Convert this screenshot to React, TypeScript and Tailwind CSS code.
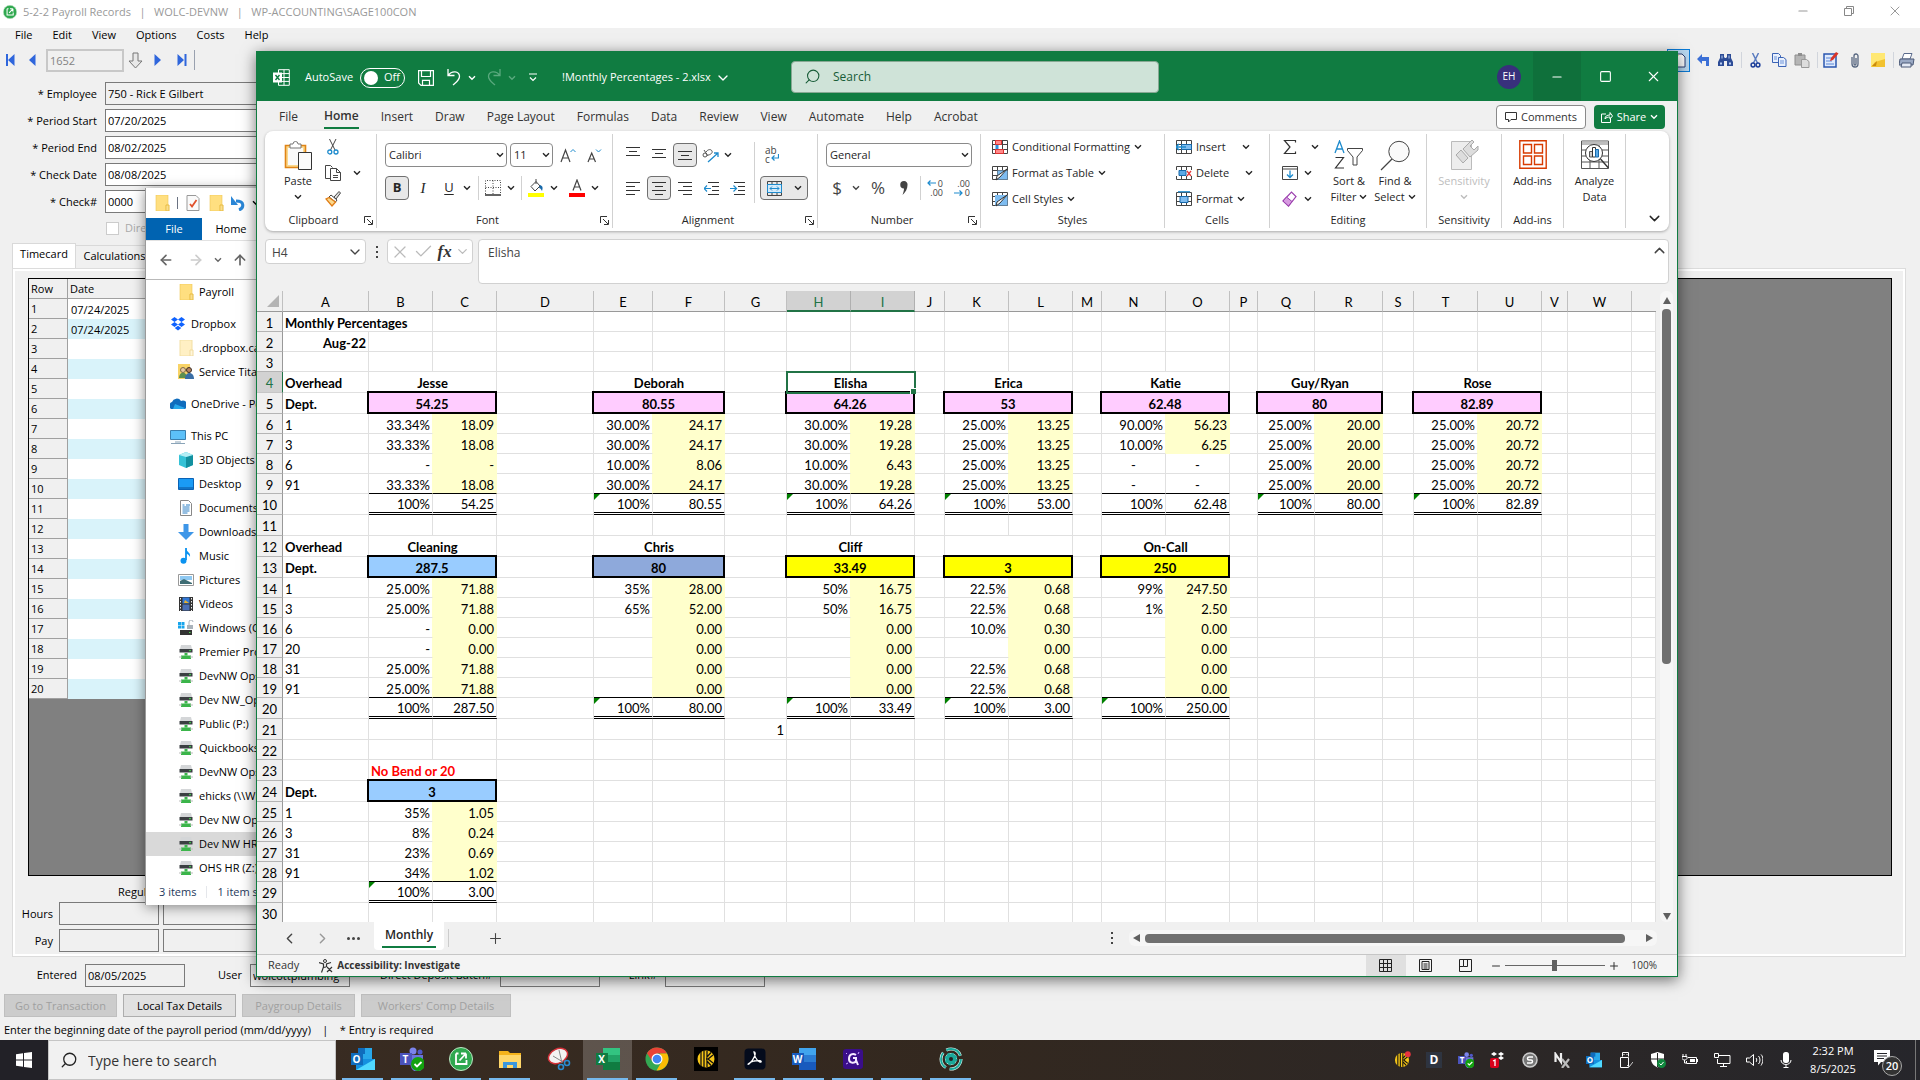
import type { ReactNode } from "react";
import { clsx } from "clsx";
import {
  ArrowLeft,
  ArrowRight,
  ArrowUp,
  Check,
  ChevronDown,
  ChevronLeft,
  ChevronRight,
  ChevronUp,
  Minus,
  Plus,
  Search,
  Square,
  X,
} from "lucide-react";

/* ---------- shared bits ---------- */

function Chev({ className }: { className?: string }) {
  return (
    <svg viewBox="0 0 8 6" className={clsx("w-2 h-1.5 shrink-0", className)} fill="none" stroke="currentColor" strokeWidth="1.4">
      <path d="M1 1.2 4 4.2 7 1.2" />
    </svg>
  );
}

function Svg({ w = 16, h = 16, box, children }: { w?: number; h?: number; box?: string; children: ReactNode }) {
  return (
    <svg width={w} height={h} viewBox={box ?? `0 0 ${w} ${h}`} fill="none" className="shrink-0" aria-hidden="true">
      {children}
    </svg>
  );
}

function IconButton({ label, className, children }: { label: string; className?: string; children: ReactNode }) {
  return (
    <button type="button" aria-label={label} className={clsx("flex items-center justify-center", className)}>
      {children}
    </button>
  );
}

/* ---------- payroll window ---------- */

const payrollFields = [
  { id: "employee", label: "* Employee", value: "750 - Rick E Gilbert", readOnly: true },
  { id: "period-start", label: "* Period Start", value: "07/20/2025" },
  { id: "period-end", label: "* Period End", value: "08/02/2025" },
  { id: "check-date", label: "* Check Date", value: "08/08/2025" },
  { id: "check-no", label: "* Check#", value: "0000" },
];

const footerFields = [
  { id: "entered", label: "Entered", value: "08/05/2025", width: "w-[85px]" },
  { id: "user", label: "User", value: "wolcottplumbing", width: "w-[65px]" },
  { id: "batch", label: "Direct Deposit Batch#", value: "", width: "w-[150px]" },
  { id: "link", label: "Link#", value: "", width: "w-[65px]" },
];

function SageLogo({ size }: { size: number }) {
  return (
    <Svg w={size} h={size} box="0 0 24 24">
      <circle cx="12" cy="12" r="11.5" fill="#2fa84f" stroke="#bfe6c6" strokeWidth="1" />
      <path d="M7 6.500v10.500h10.500v-4M7 6.500h2.500M10.500 13.500l6.500-7m0 0h-5m5 0v5" stroke="#fff" strokeWidth="1.8" />
    </Svg>
  );
}

function ToolSep() {
  return <span className="w-px h-4 bg-gray-300" />;
}

function PayrollToolbar() {
  return (
    <div className="flex items-center h-7 pl-0.5 shrink-0">
      <IconButton label="First record" className="w-4">
        <Svg w={10} h={12}><path d="M1 0h2v12H1zM9.500 0v12L3 6z" fill="#2f66dc" /></Svg>
      </IconButton>
      <IconButton label="Previous record" className="w-7">
        <Svg w={8} h={12}><path d="M7.500 0v12L1 6z" fill="#2f66dc" /></Svg>
      </IconButton>
      <input aria-label="Record number" readOnly value="1652" className="w-[78px] h-[23px] border-2 border-[#c8c8c8] bg-[#f0f0f0] px-0.5 text-[#838383]" />
      <IconButton label="Go to record" className="w-[22px]">
        <Svg w={15} h={17}><path d="M5 1h5v8h4l-6.500 7L1 9h4z" fill="#e8e8e8" stroke="#777" /></Svg>
      </IconButton>
      <IconButton label="Next record" className="w-6">
        <Svg w={8} h={12}><path d="M.5 0v12L7 6z" fill="#2f66dc" /></Svg>
      </IconButton>
      <IconButton label="Last record" className="w-6">
        <Svg w={10} h={12}><path d="M7.500 0h2v12h-2zM.5 0v12L7 6z" fill="#2f66dc" /></Svg>
      </IconButton>
      <span className="w-px h-5 bg-gray-400" />
      <div className="ml-auto flex items-center">
        <IconButton label="New" className="w-[23px] h-[23px] border border-[#0a7bd8] bg-[#b9d9f2] mr-0.5">
          <Svg w={14} h={16}><path d="M3 2h7l3 3v10H3z" fill="#fff" stroke="#2c3e75" /><path d="m3 0 1.200 2.500L7 3 4.700 5 3 7 1.500 5 0 3z" fill="#f4bf3b" /></Svg>
        </IconButton>
        <IconButton label="Undo" className="w-[22px]">
          <Svg w={13} h={14}><path d="M0 6 5 1v3h7v9H9V8H5v3z" fill="#3b6fd6" /></Svg>
        </IconButton>
        <IconButton label="Find" className="w-[22px]">
          <Svg w={15} h={14}><path d="M2 1h4v3l1 1h1l1-1V1h4v4l2 4v4H9V8H6v5H0V9l2-4z" fill="#2d4c96" /><path d="M2 9.500h2v2H2zM11 9.500h2v2h-2zM3.500 2.500h1v3h-1zM10.500 2.500h1v3h-1z" fill="#b9cdf2" /></Svg>
        </IconButton>
        <span className="w-[5px]" />
        <ToolSep />
        <IconButton label="Cut" className="w-[26px]">
          <Svg w={11} h={15}><path d="M2.500 0 7.500 10M8.500 0 3.500 10" stroke="#5b7cc0" strokeWidth="1.500" /><circle cx="3" cy="12" r="1.900" stroke="#1d3f9a" strokeWidth="1.500" /><circle cx="8" cy="12" r="1.900" stroke="#1d3f9a" strokeWidth="1.500" /></Svg>
        </IconButton>
        <IconButton label="Copy" className="w-[22px]">
          <Svg w={15} h={14}><path d="M.5.5h6l2 2v7h-8z" fill="#e8f0fd" stroke="#3b63b5" /><path d="M6.500 4.500h5l2.500 2v7H6.500z" fill="#e8f0fd" stroke="#3b63b5" /><path d="M8 8h4M8 10h4M2 4h3M2 6h3" stroke="#6f94d9" /></Svg>
        </IconButton>
        <IconButton label="Paste" className="w-6">
          <Svg w={16} h={15}><path d="M1 2h10v10H1z" fill="#b5b5b5" stroke="#8e8e8e" /><path d="M4 0h4v3H4z" fill="#8e8e8e" /><path d="M7.500 6.500h5l2.500 2v6H7.500z" fill="#ddd" stroke="#999" /></Svg>
        </IconButton>
        <span className="w-[3px]" />
        <ToolSep />
        <IconButton label="Edit note" className="w-[26px]">
          <Svg w={16} h={16}><path d="M1 2h12v13H1z" fill="#dfeafc" stroke="#2b57b0" strokeWidth="1.500" /><path d="M3 6h6M3 9h6M3 12h8" stroke="#5a86d6" /><path d="m7 9 1-3 5-6 2.500 1.500L10 8z" fill="#d9352a" /></Svg>
        </IconButton>
        <IconButton label="Attachments" className="w-[22px]">
          <Svg w={8} h={15}><path d="M1 4v7a3 3 0 0 0 6 0V3a2 2 0 0 0-4 0v8a1 1 0 0 0 2 0V5" stroke="#56657f" strokeWidth="1.300" /></Svg>
        </IconButton>
        <IconButton label="Notes" className="w-6">
          <Svg w={14} h={14}><path d="M0 0h14v14H0z" fill="#f2c230" /><path d="M0 0h14v6L4 9l-4 5z" fill="#ffe873" /><path d="M1 13 6 8l-1 5z" fill="#c98a0e" /></Svg>
        </IconButton>
        <span className="w-[3px]" />
        <ToolSep />
        <IconButton label="Print" className="w-[26px]">
          <Svg w={16} h={15}><path d="M5 .5h8L11 6H3z" fill="#fff" stroke="#5b6b8c" /><path d="M1 6h14l-1 6H0z" fill="#9aa9c4" stroke="#4a5876" /><path d="M3 10h9v4H2z" fill="#e4eaf5" stroke="#4a5876" /></Svg>
        </IconButton>
      </div>
    </div>
  );
}

function PayrollWindow() {
  return (
    <section className="flex-1 min-h-0 flex flex-col bg-[#f0f0f0] text-[11px] leading-4">
      <header className="flex items-center h-7 bg-white text-[#999] shrink-0 pl-[3px] pb-1">
        <SageLogo size={14} />
        <span className="ml-1.5 whitespace-pre">5-2-2 Payroll Records   |   WOLC-DEVNW   |   WP-ACCOUNTING\SAGE100CON</span>
        <div className="ml-auto flex self-start h-[22px] pr-0.5">
          <IconButton label="Minimize" className="w-[46px]"><Minus size={14} strokeWidth={2} /></IconButton>
          <IconButton label="Restore" className="w-[46px]">
            <Svg w={10} h={10}><path d="M.5 2.500h7v7h-7zM2.500 2.500v-2h7v7h-2" stroke="#888" /></Svg>
          </IconButton>
          <IconButton label="Close" className="w-[46px]"><X size={16} strokeWidth={1.5} /></IconButton>
        </div>
      </header>

      <nav className="flex h-[18px] pb-1 pl-[15px] gap-5 items-center shrink-0">
        {["File", "Edit", "View", "Options", "Costs", "Help"].map((m) => (
          <button key={m} type="button">{m}</button>
        ))}
      </nav>

      <PayrollToolbar />

      <div className="flex flex-col gap-1 pt-2 shrink-0">
        {payrollFields.map((f) => (
          <div key={f.id} className="flex items-center h-[23px]">
            <label htmlFor={f.id} className="w-[97px] text-right">{f.label}</label>
            <input
              id={f.id}
              defaultValue={f.value}
              readOnly={f.readOnly}
              className={clsx("ml-2 w-[260px] h-[23px] border border-[#7a7a7a] px-0.5", f.readOnly ? "bg-[#f0f0f0]" : "bg-white")}
            />
          </div>
        ))}
      </div>
      <label className="flex items-center gap-1.5 pl-[106px] h-[30px] text-[#a9a9a9] shrink-0">
        <input type="checkbox" disabled className="appearance-none size-[13px] border border-[#ccc] bg-white" />
        Direct Deposit
      </label>

      <div className="flex items-end h-[25px] pl-3 shrink-0" role="tablist">
        <button type="button" role="tab" className="h-[25px] w-16 pb-1 border border-b-0 border-[#d9d9d9] bg-white">Timecard</button>
        <button type="button" role="tab" className="h-[23px] w-[78px] pb-0.5 border border-l-0 border-b-0 border-[#d9d9d9]">Calculations</button>
      </div>

      <div className="flex-1 min-h-0 flex flex-col ml-3 mr-[14px] border border-[#dcdcdc] outline-2 outline-white -outline-offset-3">
        <div className="flex-1 min-h-0 mt-[9px] ml-[15px] mr-[13px] mb-[81px] border border-black bg-[#808080]">
          <table className="border-separate border-spacing-0">
            <thead>
              <tr className="h-5 bg-[#f0f0f0]">
                <th className="w-[39px] p-0 pl-0.5 text-left font-normal border-r border-b border-[#a0a0a0]">Row</th>
                <th className="w-[200px] p-0 pl-0.5 text-left font-normal border-b border-[#a0a0a0]">Date</th>
              </tr>
            </thead>
            <tbody>
              {Array.from({ length: 20 }, (_, i) => (
                <tr key={i} className="h-5">
                  <td className="p-0 pl-0.5 bg-[#f0f0f0] border-r border-b border-[#a0a0a0]">{i + 1}</td>
                  <td className={clsx("p-0 pl-[3px] pt-0.5", i % 2 ? "bg-[#d9f3fa]" : "bg-white")}>{i < 2 ? "07/24/2025" : ""}</td>
                </tr>
              ))}
            </tbody>
          </table>
        </div>
        <div className="h-20 -mt-[81px] shrink-0 pt-2">
          <div className="pl-[105px] h-4">Regular</div>
          {["Hours", "Pay"].map((l) => (
            <div key={l} className="flex items-center h-[27px]">
              <label htmlFor={l} className="w-10 text-right">{l}</label>
              <input id={l} readOnly className="ml-1.5 w-[100px] h-[23px] border border-[#7a7a7a]" />
              <input aria-label={`${l}, second column`} readOnly className="ml-1 w-[100px] h-[23px] border border-[#7a7a7a]" />
            </div>
          ))}
        </div>
      </div>

      <div className="flex items-center h-[37px] pb-px shrink-0">
        {footerFields.map((f) => (
          <div key={f.id} className="flex items-center">
            <label htmlFor={f.id} className={clsx("text-right pr-2", f.width)}>{f.label}</label>
            <input id={f.id} readOnly value={f.value} className="w-[100px] h-[23px] border border-[#7a7a7a] px-0.5" />
          </div>
        ))}
      </div>
      <div className="flex gap-1.5 pl-1 h-[23px] shrink-0">
        <button type="button" disabled className="w-[113px] bg-[#ccc] border border-[#bfbfbf] text-[#a0a0a0]">Go to Transaction</button>
        <button type="button" className="w-[113px] bg-[#e1e1e1] border border-[#adadad]">Local Tax Details</button>
        <button type="button" disabled className="w-[113px] bg-[#ccc] border border-[#bfbfbf] text-[#a0a0a0]">Paygroup Details</button>
        <button type="button" disabled className="w-[150px] bg-[#ccc] border border-[#bfbfbf] text-[#a0a0a0]">Workers' Comp Details</button>
      </div>
      <p className="h-[23px] pt-[5px] pl-1 whitespace-pre shrink-0">Enter the beginning date of the payroll period (mm/dd/yyyy)    |    * Entry is required</p>
    </section>
  );
}

/* ---------- file explorer ---------- */

type TreeIcon = "folder" | "hidden" | "shared" | "dropbox" | "onedrive" | "pc" | "cube" | "desktop" | "doc" | "down" | "music" | "picture" | "video" | "disk" | "net";

const tree: { icon: TreeIcon; name: string; root?: boolean; active?: boolean }[] = [
  { icon: "folder", name: "Payroll" },
  { icon: "dropbox", name: "Dropbox", root: true },
  { icon: "hidden", name: ".dropbox.cache" },
  { icon: "shared", name: "Service Titan" },
  { icon: "onedrive", name: "OneDrive - Personal", root: true },
  { icon: "pc", name: "This PC", root: true },
  { icon: "cube", name: "3D Objects" },
  { icon: "desktop", name: "Desktop" },
  { icon: "doc", name: "Documents" },
  { icon: "down", name: "Downloads" },
  { icon: "music", name: "Music" },
  { icon: "picture", name: "Pictures" },
  { icon: "video", name: "Videos" },
  { icon: "disk", name: "Windows (C:)" },
  { icon: "net", name: "Premier Pro" },
  { icon: "net", name: "DevNW Ops" },
  { icon: "net", name: "Dev NW_Ops" },
  { icon: "net", name: "Public (P:)" },
  { icon: "net", name: "Quickbooks" },
  { icon: "net", name: "DevNW Ops" },
  { icon: "net", name: "ehicks (\\\\WP)" },
  { icon: "net", name: "Dev NW Ops" },
  { icon: "net", name: "Dev NW HR", active: true },
  { icon: "net", name: "OHS HR (Z:)" },
];

const treeIcons: Record<TreeIcon, ReactNode> = {
  folder: <><path d="M2 0h12v16H2z" fill="#ffdf80" /><path d="M12 10h3v6h-3z" fill="#ffe9a8" stroke="#e6b93c" /><path d="M2 0h12v16H2z" stroke="#efc650" strokeWidth=".6" /></>,
  hidden: <><path d="M2 0h12v16H2z" fill="#fff0c4" stroke="#f2dfa4" /><path d="M12 10h3v6h-3z" fill="#fff6dc" stroke="#f0dba0" /></>,
  shared: <><path d="M0 0h12v15H0z" fill="#f8d366" /><circle cx="5" cy="6" r="2.500" fill="#e9c8a0" stroke="#7d6a4a" /><path d="M1 14c0-7 8-7 8 0z" fill="#5d8f4e" /><circle cx="11" cy="6" r="2.500" fill="#b78562" stroke="#3b2d24" /><path d="M7 15c0-8 9-8 9 0z" fill="#3a6ea5" /></>,
  dropbox: <path d="M4.500 1 8 3.500 4.500 6 1 3.500zM11.500 1 15 3.500 11.500 6 8 3.500zM4.500 6 8 8.500 4.500 11 1 8.500zM11.500 6 15 8.500 11.500 11 8 8.500zM8 9.800l3.300 2.300L8 14.500l-3.300-2.400z" fill="#0f62fe" />,
  onedrive: <><path d="M1 13a4 4 0 0 1 1-7 5 5 0 0 1 9-1 4 4 0 0 1 4 8z" fill="#0f6cbd" /><path d="m5 8 10 4a3 3 0 0 1-2 1H3z" fill="#28a8ea" /></>,
  pc: <><path d="M.5 2.500h15v9H.5z" fill="#5cc0f8" stroke="#3a7fae" /><path d="M5 14h6M1 15.500h14" stroke="#8aa4b8" /></>,
  cube: <><path d="m8 0 7 3v10l-7 3-7-3V3z" fill="#35c2d6" /><path d="m8 5 7-2v10l-7 3z" fill="#12909f" /><path d="m8 0 7 3-7 2-7-2z" fill="#b4eef5" /></>,
  desktop: <><path d="M.5 2.500h15v11H.5z" fill="#1a9bf5" stroke="#0a62b5" /><path d="M1 12h14" stroke="#0b4f96" /></>,
  doc: <><path d="M2.500.5h8l3 3v12h-11z" fill="#fff" stroke="#888" /><path d="M4.500 5h2M8 5h4M4.500 7h7M4.500 9h7M4.500 11h7M4.500 13h5" stroke="#2a7fc4" /></>,
  down: <path d="M5.500 0h5v8H16l-8 8-8-8h5.500z" fill="#3d96e8" />,
  music: <><path d="M8 0v12" stroke="#0a92f0" strokeWidth="1.800" /><path d="M8 0c0 4 5 4 4 9-1-3-4-3-4-4z" fill="#0a92f0" /><circle cx="5.500" cy="12.800" r="3" fill="#0a92f0" /></>,
  picture: <><path d="M.5 2.500h15v11H.5z" fill="#fff" stroke="#999" /><path d="M2 4h12v4H2z" fill="#8fc9f2" /><path d="M2 12V9l4-2 8 4v1z" fill="#3e6d74" /></>,
  video: <><path d="M1 1h14v14H1z" fill="#333" /><path d="M4.500 1.500h7v6h-7z" fill="#3278d6" /><path d="M4.500 8.500h7v6h-7z" fill="#4a6fb5" /><path d="m7 4 4 3H6z" fill="#e6b02e" /><path d="M2.500 2v13M13.500 2v13" stroke="#eee" strokeDasharray="1.500 1.500" /></>,
  disk: <><path d="M0 2h3v3H0zM3.500 2h3v3h-3zM0 5.500h3v3H0zM3.500 5.500h3v3h-3z" fill="#18a5ec" /><path d="M9 5h6v4H9z" fill="#aab3bb" /><path d="M11 5V2a2 2 0 0 1 4 0" stroke="#aab3bb" /><path d="M2 10h12v5H2z" fill="#333" /><path d="M11 12.500h1.500" stroke="#4be04b" /></>,
  net: <><path d="M3 1h10l1 4H2z" fill="#d4d6d8" /><path d="M1.500 5h13v3.500h-13z" fill="#3b3f42" /><path d="M11 6.700h2" stroke="#3fe04a" /><path d="M6.500 9h3v2.500h-3z" fill="#3bb54a" /><path d="M3 11.500h10V15H3z" fill="#3bb54a" /><path d="M1 13h3M12 13h3" stroke="#bbb" /></>,
};

function ExplorerWindow() {
  return (
    <section className="absolute left-[145px] top-[188px] bottom-[175px] w-[480px] bg-white flex flex-col text-[11px] leading-4 border-l border-[#9a9a9a] shadow-[0_2px_12px_rgba(0,0,0,0.45)]">
      <div className="flex items-center h-[30px] pl-2 gap-[7px] shrink-0">
        <Svg>{treeIcons.folder}</Svg>
        <span className="w-px h-3 bg-gray-500" />
        <Svg w={16} h={16}><path d="M2 .5h9l3 3v12H2z" fill="#fafafa" stroke="#999" /><path d="m5 9 2 2.500L11.500 5" stroke="#e0512b" strokeWidth="1.800" /></Svg>
        <Svg>{treeIcons.folder}</Svg>
        <Svg w={14} h={16}><path d="M8 15c5-2 6-9-3-9" stroke="#2a86d6" strokeWidth="3" /><path d="M0 1v9h7z" fill="#2a86d6" /></Svg>
        <Chev />
      </div>
      <div className="flex h-[23px] shrink-0 border-b border-[#e2e2e2]">
        <button type="button" className="w-14 bg-[#0063b1] text-white">File</button>
        <button type="button" className="w-[58px]">Home</button>
      </div>
      <div className="flex items-center h-[39px] pl-3 gap-2.5 shrink-0 border-b border-[#b9b9b9] text-[#666]">
        <IconButton label="Back"><ArrowLeft size={16} strokeWidth={2.5} /></IconButton>
        <IconButton label="Forward" className="ml-1 text-[#ccc]"><ArrowRight size={16} strokeWidth={2.5} /></IconButton>
        <Chev />
        <IconButton label="Up"><ArrowUp size={16} strokeWidth={2.5} /></IconButton>
        <input aria-label="Address" className="h-[22px] flex-1 border border-[#d9d9d9]" />
      </div>
      <ul className="flex-1 min-h-0 overflow-hidden">
        {tree.map((t, i) => (
          <li
            key={i}
            className={clsx(
              "flex items-center h-6 gap-[5px] whitespace-nowrap",
              t.root ? "mt-2 pl-6" : "pl-8",
              t.active && "bg-[#d9d9d9]",
            )}
          >
            <Svg>{treeIcons[t.icon]}</Svg>
            {t.name}
          </li>
        ))}
      </ul>
      <footer className="flex items-center h-[25px] pb-px pl-[13px] gap-2.5 text-[#1e395b] shrink-0">
        <span>3 items</span>
        <span className="w-px h-3 bg-gray-200" />
        <span>1 item selected</span>
      </footer>
    </section>
  );
}

/* ---------- spreadsheet data ---------- */

type Kind = "left" | "right" | "label" | "date" | "name" | "pct" | "pctLast" | "val" | "valLast" | "dash" | "dashLast" | "sumPct" | "sumVal" | "note" | "box";
type Cell = { text: string; kind: Kind; span?: number; fill?: string; flag?: boolean; selected?: boolean };
type Block = { col: string; row: number; name: string; total: string; fill: string; rows: [string, string][]; sum: [string, string]; flag?: boolean };

const columns: [string, number][] = [
  ["A", 86], ["B", 64], ["C", 64], ["D", 97], ["E", 59], ["F", 72], ["G", 62], ["H", 64], ["I", 64],
  ["J", 30], ["K", 64], ["L", 64], ["M", 29], ["N", 64], ["O", 64], ["P", 28], ["Q", 57], ["R", 68],
  ["S", 31], ["T", 64], ["U", 64], ["V", 26], ["W", 64],
];

// rows that are one pixel taller than the rest
const tallRows = [4, 5, 10, 11, 12, 13, 20, 21, 23, 24, 29];

const pink = "bg-[#ffccff]";
const sky = "bg-[#99ccff]";
const steel = "bg-[#8ea9db]";
const yellow = "bg-[#ffff00]";

const quarter = (v: string): [string, string][] => Array.from({ length: 4 }, () => ["25.00%", v]);

const blocks: Block[] = [
  { col: "B", row: 4, name: "Jesse", total: "54.25", fill: pink, rows: [["33.34%", "18.09"], ["33.33%", "18.08"], ["-", "-"], ["33.33%", "18.08"]], sum: ["100%", "54.25"] },
  { col: "E", row: 4, name: "Deborah", total: "80.55", fill: pink, rows: [["30.00%", "24.17"], ["30.00%", "24.17"], ["10.00%", "8.06"], ["30.00%", "24.17"]], sum: ["100%", "80.55"], flag: true },
  { col: "H", row: 4, name: "Elisha", total: "64.26", fill: pink, rows: [["30.00%", "19.28"], ["30.00%", "19.28"], ["10.00%", "6.43"], ["30.00%", "19.28"]], sum: ["100%", "64.26"], flag: true },
  { col: "K", row: 4, name: "Erica", total: "53", fill: pink, rows: quarter("13.25"), sum: ["100%", "53.00"], flag: true },
  { col: "N", row: 4, name: "Katie", total: "62.48", fill: pink, rows: [["90.00%", "56.23"], ["10.00%", "6.25"], ["--", "--"], ["--", "--"]], sum: ["100%", "62.48"] },
  { col: "Q", row: 4, name: "Guy/Ryan", total: "80", fill: pink, rows: quarter("20.00"), sum: ["100%", "80.00"], flag: true },
  { col: "T", row: 4, name: "Rose", total: "82.89", fill: pink, rows: quarter("20.72"), sum: ["100%", "82.89"], flag: true },
  { col: "B", row: 12, name: "Cleaning", total: "287.5", fill: sky, rows: [["25.00%", "71.88"], ["25.00%", "71.88"], ["-", "0.00"], ["-", "0.00"], ["25.00%", "71.88"], ["25.00%", "71.88"]], sum: ["100%", "287.50"] },
  { col: "E", row: 12, name: "Chris", total: "80", fill: steel, rows: [["35%", "28.00"], ["65%", "52.00"], ["", "0.00"], ["", "0.00"], ["", "0.00"], ["", "0.00"]], sum: ["100%", "80.00"], flag: true },
  { col: "H", row: 12, name: "Cliff", total: "33.49", fill: yellow, rows: [["50%", "16.75"], ["50%", "16.75"], ["", "0.00"], ["", "0.00"], ["", "0.00"], ["", "0.00"]], sum: ["100%", "33.49"], flag: true },
  { col: "K", row: 12, name: "", total: "3", fill: yellow, rows: [["22.5%", "0.68"], ["22.5%", "0.68"], ["10.0%", "0.30"], ["", "0.00"], ["22.5%", "0.68"], ["22.5%", "0.68"]], sum: ["100%", "3.00"], flag: true },
  { col: "N", row: 12, name: "On-Call", total: "250", fill: yellow, rows: [["99%", "247.50"], ["1%", "2.50"], ["", "0.00"], ["", "0.00"], ["", "0.00"], ["", "0.00"]], sum: ["100%", "250.00"], flag: true },
  { col: "B", row: 23, name: "No Bend or 20", total: "3", fill: sky, rows: [["35%", "1.05"], ["8%", "0.24"], ["23%", "0.69"], ["34%", "1.02"]], sum: ["100%", "3.00"], flag: true },
];

function buildCells() {
  const cells: Record<string, Cell> = {
    A1: { text: "Monthly Percentages", kind: "label", span: 2 },
    A2: { text: "Aug-22", kind: "date" },
    G21: { text: "1", kind: "right" },
  };
  const departments: Record<number, string[]> = {
    4: ["Overhead", "Dept.", "1", "3", "6", "91"],
    12: ["Overhead", "Dept.", "1", "3", "6", "20", "31", "91"],
    24: ["Dept.", "1", "3", "31", "91"],
  };
  for (const [start, names] of Object.entries(departments)) {
    names.forEach((text, i) => {
      cells[`A${Number(start) + i}`] = { text, kind: /^\d/.test(text) ? "left" : "label" };
    });
  }
  for (const b of blocks) {
    const next = String.fromCharCode(b.col.charCodeAt(0) + 1);
    cells[b.col + b.row] = { text: b.name, kind: b.row === 23 ? "note" : "name", span: 2, selected: b.name === "Elisha" };
    cells[b.col + (b.row + 1)] = { text: b.total, kind: "box", span: 2, fill: b.fill };
    b.rows.forEach(([pct, val], i) => {
      const r = b.row + 2 + i;
      const last = i === b.rows.length - 1;
      if (pct === "--") {
        cells[b.col + r] = { text: "-", kind: last ? "dashLast" : "dash" };
        cells[next + r] = { text: "-", kind: last ? "dashLast" : "dash" };
        return;
      }
      cells[b.col + r] = { text: pct, kind: last ? "pctLast" : "pct" };
      cells[next + r] = { text: val, kind: last ? "valLast" : "val" };
    });
    const end = b.row + 2 + b.rows.length;
    cells[b.col + end] = { text: b.sum[0], kind: "sumPct", flag: b.flag };
    cells[next + end] = { text: b.sum[1], kind: "sumVal" };
  }
  return cells;
}

const cells = buildCells();

const line = "border-r border-b border-[#e0e0e0]";
const kindClass: Record<Kind, string> = {
  left: `${line} pl-0.5`,
  right: `${line} pr-0.5 text-right`,
  label: `${line} pl-0.5 font-bold`,
  date: `${line} pr-0.5 text-right font-bold`,
  name: `${line} text-center font-bold`,
  note: `${line} pl-0.5 font-bold text-[#ff0000]`,
  dash: `${line} text-center`,
  dashLast: "border-r border-b border-r-[#e0e0e0] border-b-black text-center",
  pct: "border-r border-b border-b-[#e0e0e0] border-r-[#ffffcc] pr-0.5 text-right",
  pctLast: "border-r border-b border-b-black border-r-[#ffffcc] pr-0.5 text-right",
  val: "border-r border-b border-[#ffffcc] bg-[#ffffcc] pr-0.5 text-right",
  valLast: "border-r border-b border-b-black border-r-[#ffffcc] bg-[#ffffcc] pr-0.5 text-right",
  sumPct: "relative border-r border-b-[3px] [border-bottom-style:double] border-b-black border-r-[#e0e0e0] pr-0.5 text-right",
  sumVal: "border-r border-b-[3px] [border-bottom-style:double] border-b-black border-r-[#e0e0e0] pr-0.5 text-right",
  box: "relative border-r-2 border-b-2 border-black shadow-[-2px_0_0_0_#000,0_-2px_0_0_#000,-2px_-2px_0_0_#000] text-center font-bold",
};

function SheetRow({ row }: { row: number }) {
  const tds: ReactNode[] = [];
  for (let i = 0; i < columns.length; i++) {
    const key = columns[i][0] + row;
    const cell = cells[key];
    if (!cell) {
      tds.push(<td key={key} className={line} />);
      continue;
    }
    tds.push(
      <td
        key={key}
        colSpan={cell.span}
        className={clsx("pt-0.5 pb-0 whitespace-nowrap", kindClass[cell.kind], cell.fill, cell.selected && "relative z-10 outline-2 -outline-offset-1 outline-[#217346]")}
      >
        {cell.flag && <span className="absolute left-0 top-0 border-t-[6px] border-r-[6px] border-t-[#008000] border-r-transparent" />}
        {cell.text}
        {cell.selected && <span className="absolute -right-0.5 -bottom-0.5 size-[6px] bg-[#217346] border-t border-l border-white" />}
      </td>,
    );
    if (cell.span) i += cell.span - 1;
  }
  return (
    <tr className={tallRows.includes(row) ? "h-[21px]" : "h-5"}>
      <th
        scope="row"
        className={clsx(
          "p-0 pt-0.5 font-normal text-center border-b border-r",
          row === 4 ? "bg-[#d2d2d2] text-[#217346] border-b-[#c6c6c6] border-r-[#217346]" : "bg-[#f0f0f0] border-b-[#b4b4b4] border-r-[#999]",
        )}
      >
        {row}
      </th>
      {tds}
      <td className={line} />
    </tr>
  );
}

function Sheet() {
  return (
    <div className="flex flex-1 min-h-0 overflow-hidden">
      <div className="flex-1 min-w-0 overflow-hidden bg-white">
        <table className="w-full table-fixed border-separate border-spacing-0 font-['Lato','Liberation_Sans',sans-serif] text-[13px] leading-4 text-black">
          <colgroup>
            <col className="w-[26px]" />
            {columns.map(([name, width]) => (
              <col key={name} style={{ width }} />
            ))}
            <col />
          </colgroup>
          <thead>
            <tr className="h-[21px] bg-[#f0f0f0]">
              <th className="p-0 border-r border-b border-r-[#c0c0c0] border-b-[#999]">
                <span className="block ml-auto mr-[3px] size-0 border-b-[12px] border-l-[12px] border-b-[#b4b4b4] border-l-transparent" />
              </th>
              {columns.map(([name]) => (
                <th
                  key={name}
                  scope="col"
                  className={clsx(
                    "p-0 pt-0.5 font-normal text-center border-r",
                    name === "H" || name === "I"
                      ? "bg-[#d2d2d2] text-[#217346] border-b-2 border-r-[#b0b0b0] border-b-[#217346]"
                      : "border-b border-r-[#c0c0c0] border-b-[#999]",
                  )}
                >
                  {name}
                </th>
              ))}
              <th className="p-0 border-b border-[#999]" />
            </tr>
          </thead>
          <tbody>
            {Array.from({ length: 30 }, (_, i) => (
              <SheetRow key={i} row={i + 1} />
            ))}
          </tbody>
        </table>
      </div>
      <div className="w-[21px] flex flex-col items-center shrink-0 bg-[#f0f0f0]">
        <div className="w-[13px] flex-1 flex flex-col items-center rounded-md bg-[#f6f6f6] pt-1.5 pb-0.5">
          <span className="border-x-4 border-b-[7px] border-x-transparent border-b-[#606060]" />
          <span className="mt-[5px] w-[9px] h-[355px] rounded bg-[#707070]" />
          <span className="mt-auto border-x-4 border-t-[7px] border-x-transparent border-t-[#606060]" />
        </div>
      </div>
    </div>
  );
}

/* ---------- ribbon ---------- */

function Group({ label, width, launcher, children }: { label?: string; width: string; launcher?: boolean; children: ReactNode }) {
  return (
    <div className={clsx("flex flex-col shrink-0 my-[3px] border-r border-[#d1d1d1]", width)}>
      <div className="flex-1 min-h-0 flex">{children}</div>
      <div className={clsx("relative h-4 text-center leading-4", launcher && "pr-3.5")}>
        {label}
        {launcher && (
          <button type="button" aria-label={`${label} settings`} className="absolute right-[3px] top-1">
            <Svg w={9} h={9}><path d="M.5 7V.5H7M3 3l5 5M8.500 4v4.500H4" stroke="#333" /></Svg>
          </button>
        )}
      </div>
    </div>
  );
}

function Lines({ rows, arrow }: { rows: [number, number][]; arrow?: "in" | "out" }) {
  return (
    <Svg w={15} h={14}>
      {rows.map(([x, w], i) => (
        <path key={i} d={`M${x} ${i * 4 + 1.5}h${w}`} stroke="#333" strokeWidth="1" />
      ))}
      {arrow === "out" && <path d="M7 7.500H0M3 4.500l-3 3 3 3" stroke="#1e8bcd" strokeWidth="1.200" />}
      {arrow === "in" && <path d="M0 7.500h6M3.500 4.500l3 3-3 3" stroke="#1e8bcd" strokeWidth="1.200" />}
    </Svg>
  );
}

const Rule = () => <span className="w-px h-6 bg-[#d1d1d1]" />;

function GridIcon({ kind }: { kind: "cond" | "table" | "cell" | "insert" | "delete" | "format" }) {
  const sheet = <path d="M.5 1.500h15v13H.5zM.5 5.500h15M.5 10.500h15M5.500 1.500v13M10.500 1.500v13" stroke="#444" />;
  return (
    <Svg>
      {kind !== "delete" && sheet}
      {kind === "cond" && <><path d="M3.500 1.500h6v4h-6zM3.500 10.500h8v4h-8z" fill="#ff8a8a" stroke="#d33" /><path d="M3.500 6h3v4h-3z" fill="#2b8fdc" /></>}
      {kind === "table" && <><path d="M5.500 5.500h10v9h-10z" fill="#7ebcf0" /><path d="m15 4-7 8-4 3 1-4z" fill="#fff" stroke="#333" /></>}
      {kind === "cell" && <><path d="M3 4h12.500v10.500H3z" fill="#7ebcf0" /><path d="m15 4-7 8-4 3 1-4z" fill="#fff" stroke="#333" /></>}
      {kind === "insert" && <><path d="M5.500 5.500h10v5h-10z" fill="#7ebcf0" stroke="#1769aa" /><path d="M10 8H0m3-3L0 8l3 3" stroke="#1e8bcd" strokeWidth="1.500" /></>}
      {kind === "delete" && <><path d="M.5 5V1.500h15V5M.5 11v3.500h15V11M5.500 1.500V5M10.500 1.500V5M5.500 11v3.500M10.500 11v3.500" stroke="#444" /><path d="M3 5.500h7v5H3z" fill="#5aa9e6" stroke="#1769aa" /><path d="m11 6 4 5m0-5-4 5" stroke="#e23b3b" strokeWidth="1.300" /></>}
      {kind === "format" && <><path d="M4 5.500h8v6H4z" fill="#7ebcf0" stroke="#1769aa" /><path d="M2 .8h12" stroke="#1e8bcd" strokeWidth="1.300" /></>}
    </Svg>
  );
}

function MenuItem({ icon, text, gap }: { icon: ReactNode; text: string; gap?: string }) {
  return (
    <button type="button" className="flex items-center h-[26px] shrink-0 whitespace-nowrap">
      {icon}
      <span className="ml-1">{text}</span>
      <Chev className={gap ?? "ml-1"} />
    </button>
  );
}

function BigButton({ icon, lines, chevron, width, className }: { icon: ReactNode; lines: string[]; chevron?: boolean; width: string; className?: string }) {
  return (
    <button type="button" className={clsx("flex flex-col items-center self-start pt-1.5 leading-4", width, className)}>
      <span className="h-[33px]">{icon}</span>
      {lines.map((l, i) => (
        <span key={i} className="flex items-center gap-[3px] h-4 whitespace-nowrap">
          {l}
          {chevron && i === lines.length - 1 && <Chev />}
        </span>
      ))}
    </button>
  );
}

function Ribbon() {
  return (
    <div className="flex h-[100px] mx-2 bg-white rounded-lg shadow-[0_1px_3px_rgba(0,0,0,0.3)] text-[11px] text-[#262626] shrink-0">
      <Group label="Clipboard" width="w-[112px]" launcher>
        <BigButton
          width="w-[60px]"
          className="pl-1.5"
          lines={["Paste", ""]}
          chevron
          icon={
            <Svg w={28} h={31}>
              <path d="M1.500 5.500h20v22h-20z" fill="#fbd98d" stroke="#e08416" strokeWidth="1.600" />
              <path d="M4 8h15v17H4z" fill="#fafafa" />
              <path d="M6 8V4h3a2.500 2.500 0 0 1 5 0h3v4z" fill="#fff" stroke="#777" />
              <path d="M14.500 12.500h13v17h-13z" fill="#fafafa" stroke="#333" />
            </Svg>
          }
        />
        <div className="flex flex-col">
          <IconButton label="Cut" className="w-4 h-[26px] shrink-0">
            <Svg w={12} h={16}><path d="M2.500 0 8 11M9 0 3.500 11" stroke="#444" /><circle cx="2.800" cy="13" r="2" stroke="#1e8bcd" strokeWidth="1.300" /><circle cx="9" cy="13" r="2" stroke="#1e8bcd" strokeWidth="1.300" /></Svg>
          </IconButton>
          <button type="button" aria-label="Copy" className="flex items-center h-[26px] gap-3 shrink-0">
            <Svg w={16} h={16}><path d="M5 13.500H.5V.5h5l2 2" stroke="#444" /><path d="M5.500 3.500h6l4 4v8h-10zM11.500 3.500v4h4M8 10.500h5M8 12.500h5" stroke="#444" /></Svg>
            <Chev />
          </button>
          <IconButton label="Format painter" className="w-4 h-[26px] shrink-0">
            <Svg w={16} h={16}><path d="m9 6 5-5.500 1.500 1.500L11 8z" fill="#ddd" stroke="#444" /><path d="m6 4 6 5-1.500 2L4 6z" fill="#fff" stroke="#444" /><path d="M4 6.500 1 8l6 7 3.500-4z" fill="#fbd98d" stroke="#e07c16" strokeWidth="1.300" /></Svg>
          </IconButton>
        </div>
      </Group>

      <Group label="Font" width="w-[236px]" launcher>
        <div className="flex flex-col pl-2 pt-[9px] gap-[9px]">
          <div className="flex items-center gap-[3px]">
            <label className="relative flex items-center">
              <select aria-label="Font name" className="appearance-none w-[122px] h-6 rounded border border-[#8a8a8a] bg-white pl-[3px]">
                <option>Calibri</option>
              </select>
              <Chev className="absolute right-[3px] pointer-events-none" />
            </label>
            <label className="relative flex items-center">
              <select aria-label="Font size" className="appearance-none w-[43px] h-6 rounded border border-[#8a8a8a] bg-white pl-[3px]">
                <option>11</option>
              </select>
              <Chev className="absolute right-[3px] pointer-events-none" />
            </label>
            <IconButton label="Increase font size" className="ml-1">
              <Svg w={16} h={15}><path d="m1 14 4.500-12L10 14M2.700 10h5.600" stroke="#444" strokeWidth="1.200" /><path d="m10.500 4 2.500-2.500L15.500 4" stroke="#1e8bcd" /></Svg>
            </IconButton>
            <IconButton label="Decrease font size" className="ml-2">
              <Svg w={15} h={15}><path d="M1 14 4.700 5l3.800 9M2.400 11h4.700" stroke="#444" strokeWidth="1.200" /><path d="M9 1.500 11.500 4 14 1.500" stroke="#1e8bcd" /></Svg>
            </IconButton>
          </div>
          <div className="flex items-center h-6">
            <button type="button" className="size-6 rounded border border-[#707070] bg-[#e8e8e8] font-bold text-[13px]">B</button>
            <button type="button" className="w-7 font-['Liberation_Serif',serif] italic text-[15px]">I</button>
            <button type="button" className="w-6 underline underline-offset-2 text-[13px]">U</button>
            <Chev className="ml-0.5 mr-[7px]" />
            <Rule />
            <IconButton label="Borders" className="ml-1.5">
              <Svg><path d="M.5 14V.5h15V14M.5 7.500h15M8 .5v14" stroke="#444" strokeDasharray="1 1.500" /><path d="M0 15h16" stroke="#222" strokeWidth="1.400" /></Svg>
            </IconButton>
            <Chev className="mx-1.5" />
            <Rule />
            <IconButton label="Fill color" className="ml-1.5">
              <Svg w={16} h={18}><path d="m3 7.500 5-5 4 4.500-5 5zM8 5V0" stroke="#444" /><path d="M12 6c3 1 3 3 2 6-1-2-2-3-3-3z" fill="#1769aa" /><path d="M0 14h16v4H0z" fill="#ff0" /></Svg>
            </IconButton>
            <Chev className="ml-1.5 mr-[11px]" />
            <IconButton label="Font color">
              <Svg w={16} h={18}><path d="M4 11.500 8 1l4 10.500M5.300 8h5.400" stroke="#444" strokeWidth="1.200" /><path d="M0 14h16v4H0z" fill="#f00" /></Svg>
            </IconButton>
            <Chev className="ml-1.5" />
          </div>
        </div>
      </Group>

      <Group label="Alignment" width="w-[205px]" launcher>
        <div className="flex flex-col pl-2 pt-[9px] gap-[9px]">
          <div className="flex h-6 gap-0.5">
            <IconButton label="Top align" className="size-6 pb-1"><Lines rows={[[0, 14], [3, 8], [0, 14]]} /></IconButton>
            <IconButton label="Middle align" className="size-6"><Lines rows={[[0, 14], [3, 8], [0, 14]]} /></IconButton>
            <IconButton label="Bottom align" className="size-6 rounded border border-[#707070] bg-[#e8e8e8] pt-1"><Lines rows={[[0, 14], [3, 8], [0, 14]]} /></IconButton>
            <IconButton label="Orientation" className="w-9 gap-1">
              <Svg w={18} h={15}><circle cx="3" cy="7" r="2" stroke="#555" /><path d="m2 2 4 6M4 4c2-3 5-3 6-1s-2 4-4 4" stroke="#555" /><path d="m6 14 10-9m-4 0h4v4" stroke="#1e8bcd" strokeWidth="1.300" /></Svg>
              <Chev />
            </IconButton>
          </div>
          <div className="flex h-6 gap-0.5">
            <IconButton label="Align left" className="size-6"><Lines rows={[[0, 14], [0, 9], [0, 14], [0, 9]]} /></IconButton>
            <IconButton label="Center" className="size-6 rounded border border-[#707070] bg-[#e8e8e8]"><Lines rows={[[0, 14], [3, 8], [0, 14], [3, 8]]} /></IconButton>
            <IconButton label="Align right" className="size-6"><Lines rows={[[0, 14], [5, 9], [0, 14], [5, 9]]} /></IconButton>
            <IconButton label="Decrease indent" className="size-6"><Lines rows={[[4, 11], [8, 7], [8, 7], [4, 11]]} arrow="out" /></IconButton>
            <IconButton label="Increase indent" className="size-6"><Lines rows={[[4, 11], [8, 7], [8, 7], [4, 11]]} arrow="in" /></IconButton>
          </div>
        </div>
        <span className="w-px h-[61px] mt-2 mx-[5px] bg-[#d1d1d1]" />
        <div className="flex flex-col pt-[9px] gap-[9px]">
          <IconButton label="Wrap text" className="size-6">
            <span className="relative text-[10px] leading-[9px] text-[#444] text-left w-3.5">
              ab<br />c
              <svg viewBox="0 0 8 8" className="absolute left-1.5 top-2 w-2 h-2" fill="none" stroke="#1e8bcd" strokeWidth="1.2"><path d="M7.500 0v4H1m2.500-2.500L1 4l2.500 2.500" /></svg>
            </span>
          </IconButton>
          <IconButton label="Merge and center" className="w-12 h-6 gap-3 rounded border border-[#707070] bg-[#e8e8e8]">
            <Svg w={15} h={15}><path d="M.5.5h14v14H.5zM5 .5v3M10 .5v3M5 11.500v3M10 11.500v3" stroke="#444" /><path d="M.5 3.500h14v8H.5z" fill="#d4ebfb" stroke="#1e8bcd" /><path d="M3 7.500h9M5 5.500l-2 2 2 2M10 5.500l2 2-2 2" stroke="#1e8bcd" /></Svg>
            <Chev />
          </IconButton>
        </div>
      </Group>

      <Group label="Number" width="w-[163px]" launcher>
        <div className="flex flex-col pl-2 pt-[9px] gap-[9px]">
          <label className="relative flex items-center">
            <select aria-label="Number format" className="appearance-none w-[146px] h-6 rounded border border-[#8a8a8a] bg-white pl-[3px]">
              <option>General</option>
            </select>
            <Chev className="absolute right-[3px] pointer-events-none" />
          </label>
          <div className="flex items-center h-6 text-[#444]">
            <button type="button" className="w-[22px] text-[17px]">$</button>
            <Chev className="ml-1 mr-2" />
            <button type="button" className="w-5 text-[17px]">%</button>
            <IconButton label="Comma style" className="w-8">
              <Svg w={8} h={14}><path d="M4 0a3.500 3.500 0 0 1 3.500 4c0 4-2 7-5 10 1-3 1.500-5 1.500-6.500A3.700 3.700 0 0 1 4 0z" fill="#444" /></Svg>
            </IconButton>
            <Rule />
            <IconButton label="Increase decimal" className="ml-1.5 relative w-4 h-6 text-[9px] leading-[9px]">
              <span className="text-right w-4">0<br />.00</span>
              <svg viewBox="0 0 9 6" className="absolute left-0 top-1 w-[9px] h-1.5" fill="none" stroke="#1e8bcd" strokeWidth="1.2"><path d="M9 3H1m2.500-2.500L1 3l2.500 2.500" /></svg>
            </IconButton>
            <IconButton label="Decrease decimal" className="ml-[11px] relative w-4 h-6 text-[9px] leading-[9px]">
              <span className="text-right w-4">.00<br />0</span>
              <svg viewBox="0 0 9 6" className="absolute left-0 bottom-1 w-[9px] h-1.5" fill="none" stroke="#1e8bcd" strokeWidth="1.2"><path d="M0 3h8M5.500.5 8 3 5.500 5.500" /></svg>
            </IconButton>
          </div>
        </div>
      </Group>

      <Group label="Styles" width="w-[184px]">
        <div className="flex flex-col pl-[11px]">
          <MenuItem icon={<GridIcon kind="cond" />} text="Conditional Formatting" />
          <MenuItem icon={<GridIcon kind="table" />} text="Format as Table" />
          <MenuItem icon={<GridIcon kind="cell" />} text="Cell Styles" />
        </div>
      </Group>

      <Group label="Cells" width="w-[105px]">
        <div className="flex flex-col pl-[11px]">
          <MenuItem icon={<GridIcon kind="insert" />} text="Insert" gap="ml-4" />
          <MenuItem icon={<GridIcon kind="delete" />} text="Delete" gap="ml-4" />
          <MenuItem icon={<GridIcon kind="format" />} text="Format" />
        </div>
      </Group>

      <Group label="Editing" width="w-[157px]">
        <div className="flex flex-col pl-3 w-14 shrink-0">
          <button type="button" aria-label="AutoSum" className="flex items-center h-[26px] gap-[13px] shrink-0">
            <Svg w={16} h={16}><path d="M13.500 3.500v-2h-11L8 8l-5.500 6.500h11v-2" stroke="#333" strokeWidth="1.200" /></Svg>
            <Chev />
          </button>
          <button type="button" aria-label="Fill" className="flex items-center h-[26px] gap-1.5 shrink-0">
            <Svg w={16} h={16}><path d="M.5 1.500h15v13H.5zM.5 4h15" stroke="#444" /><path d="M8 5.500v7M5 9.500l3 3 3-3" stroke="#1e8bcd" strokeWidth="1.300" /></Svg>
            <Chev />
          </button>
          <button type="button" aria-label="Clear" className="flex items-center h-[26px] gap-1.5 shrink-0">
            <Svg w={16} h={16}><path d="m1 10 8.500-9L14 5.500 6.500 15z" fill="#fff" stroke="#9b3fae" strokeWidth="1.200" /><path d="m1 10 3.500-4L10 10.500 6.500 15z" fill="#d79be0" stroke="#9b3fae" /></Svg>
            <Chev />
          </button>
        </div>
        <BigButton
          width="w-[46px]"
          lines={["Sort &", "Filter"]}
          chevron
          icon={
            <Svg w={30} h={30}>
              <path d="m1 13 4.500-12L10 13M2.700 9h5.600" stroke="#1e8bcd" strokeWidth="1.300" />
              <path d="M1.500 17.500h8l-8 10.500h8.500" stroke="#333" strokeWidth="1.200" />
              <path d="M13.500 8.500h15v2L23 17v8h-4v-8l-5.500-6.500z" stroke="#444" />
            </Svg>
          }
        />
        <BigButton
          width="w-[46px]"
          lines={["Find &", "Select"]}
          chevron
          icon={<Svg w={30} h={31}><circle cx="19" cy="11.500" r="10.200" fill="#fafafa" stroke="#444" /><path d="M12 19 1 30" stroke="#444" strokeWidth="1.200" /></Svg>}
        />
      </Group>

      <Group label="Sensitivity" width="w-[75px]">
        <BigButton
          width="w-full"
          className="text-[#bdbdbd]"
          lines={["Sensitivity", ""]}
          chevron
          icon={<Svg w={30} h={31}><path d="M2.500 1.500h20v28h-20z" fill="#ededed" stroke="#bbb" /><path d="m7 15 5-5 7 8-5 5zM14 9l9-9 2 2-4 4 4 4 4-4v4l-8 7z" fill="#ddd" stroke="#aaa" /></Svg>}
        />
      </Group>

      <Group label="Add-ins" width="w-[62px]">
        <BigButton
          width="w-full"
          lines={["Add-ins"]}
          icon={<Svg w={28} h={29}><path d="M.8.8h26.400v27.400H.8zM4.500 4.500h8v8.500h-8zM15.500 4.500h8v8.500h-8zM4.500 16h8v8.500h-8zM15.500 16h8v8.500h-8z" stroke="#d83b01" strokeWidth="1.400" /></Svg>}
        />
      </Group>

      <Group width="w-[62px]">
        <BigButton
          width="w-full"
          lines={["Analyze", "Data"]}
          icon={
            <Svg w={28} h={29}>
              <path d="M.5 1h27v27.500H.5zM.5 10h27M.5 16h27M.5 22h27M9 16v12M18 5v23" stroke="#555" />
              <path d="M1 1.500h26V5H1z" fill="#bdbdbd" />
              <circle cx="13" cy="13" r="8.500" fill="#fff" stroke="#333" />
              <path d="m19.500 19 8 9" stroke="#333" strokeWidth="1.400" />
              <path d="M8.500 11.500h3V17h-3z" fill="#ccc" stroke="#555" /><path d="M11.500 7.500h3V17h-3z" fill="#fff" stroke="#333" /><path d="M14.500 9.500h3V17h-3z" fill="#5aa9e6" stroke="#1769aa" />
            </Svg>
          }
        />
      </Group>
      <IconButton label="Collapse ribbon" className="ml-auto mr-1.5 self-end mb-1"><ChevronDown size={17} strokeWidth={2} /></IconButton>
    </div>
  );
}

/* ---------- excel window ---------- */

const excelTabs = ["Insert", "Draw", "Page Layout", "Formulas", "Data", "Review", "View", "Automate", "Help", "Acrobat"];

function ExcelTitleBar() {
  return (
    <header className="flex items-center h-[49px] bg-[#107c41] text-white text-[11px] shrink-0">
      <div className="flex items-center w-[534px] shrink-0 pl-4 pt-0.5">
        <Svg w={17} h={17}><path d="M5.500.7h10.800v15.600H5.500zM11 .7v15.600M5.500 4.600h10.800M5.500 8.500h10.800M5.500 12.400h10.800" stroke="#fff" /><path d="M0 3.500h9v10H0z" fill="#fff" /><path d="m2.500 6 4 5m0-5-4 5" stroke="#107c41" strokeWidth="1.400" /></Svg>
        <span className="ml-[15px] w-[55px]">AutoSave</span>
        <button type="button" role="switch" aria-checked="false" className="flex items-center w-[45px] h-5 rounded-full border border-white pl-[3px] gap-1.5">
          <span className="size-3.5 rounded-full bg-white" />
          Off
        </button>
        <IconButton label="Save" className="ml-[13px]">
          <Svg w={16} h={16}><path d="M.6.6h14.800v14.800H3l-2.400-2.400zM3.500.6v5.900h9V.6M4.500 15.400v-5h7v5" stroke="#fff" strokeWidth="1.200" /></Svg>
        </IconButton>
        <IconButton label="Undo" className="ml-3 gap-1.5">
          <Svg w={16} h={17}><path d="M2 0v6.500h6.500M2 6.500C6 1 13 2 13.500 7c.3 4-3 6-6.500 9" stroke="#fff" strokeWidth="1.300" /></Svg>
          <Chev />
        </IconButton>
        <IconButton label="Redo" className="ml-2.5 gap-1.5 text-[#5aa97e]">
          <Svg w={16} h={17}><path d="M14 0v6.500H7.500M14 6.500C10 1 3 2 2.500 7c-.3 4 3 6 6.500 9" stroke="#5aa97e" strokeWidth="1.300" /></Svg>
          <Chev />
        </IconButton>
        <IconButton label="Customize quick access" className="ml-[13px]">
          <Svg w={8} h={9}><path d="M0 1h8M1 4.500 4 7.500l3-3" stroke="#fff" strokeWidth="1.200" /></Svg>
        </IconButton>
        <button type="button" className="ml-[25px] flex items-center gap-1 whitespace-nowrap">
          !Monthly Percentages - 2.xlsx
          <ChevronDown size={16} strokeWidth={2} />
        </button>
      </div>
      <label className="flex flex-1 max-w-[368px] items-center h-8 px-3 gap-3 rounded-sm border border-[#87a893] bg-[#cfe3d8] text-[#185c37]">
        <Search size={17} strokeWidth={1.5} className="-scale-x-100" />
        <input type="search" placeholder="Search" className="flex-1 bg-transparent outline-none text-[12px] placeholder:text-[#185c37]" />
      </label>
      <div className="ml-auto flex items-center h-full">
        <button type="button" aria-label="Account" className="size-6 rounded-full bg-[#38307c] text-[10px] mr-3">EH</button>
        <IconButton label="Minimize" className="w-12 h-full bg-[#0f703b]"><Minus size={14} strokeWidth={2} /></IconButton>
        <IconButton label="Maximize" className="w-12 h-full"><Square size={13} strokeWidth={2} /></IconButton>
        <IconButton label="Close" className="w-12 h-full"><X size={17} strokeWidth={1.5} /></IconButton>
      </div>
    </header>
  );
}

function FormulaBar() {
  return (
    <div className="flex items-start mx-2 mt-2 mb-[7px] h-[45px] text-[12px] text-[#444] shrink-0">
      <div className="flex items-center w-[101px] h-[25px] rounded border border-[#d1d1d1] bg-white">
        <input aria-label="Name box" defaultValue="H4" className="w-[72px] pl-1.5 pt-0.5" />
        <ChevronDown size={16} strokeWidth={2} className="ml-auto mr-0.5" />
      </div>
      <span className="w-[21px] h-[25px] flex flex-col items-center justify-center gap-[3px]">
        <i className="size-0.5 bg-[#444]" /><i className="size-0.5 bg-[#444]" /><i className="size-0.5 bg-[#444]" />
      </span>
      <div className="flex items-center justify-between px-0.5 w-[86px] h-[25px] rounded border border-[#d1d1d1] bg-white text-[#bbb]">
        <X size={20} strokeWidth={1.5} />
        <Check size={21} strokeWidth={1.5} />
        <span className="font-['Liberation_Serif',serif] font-bold italic text-[17px] text-[#333]">fx</span>
        <ChevronDown size={15} strokeWidth={2} />
      </div>
      <div className="flex-1 flex items-start h-[45px] ml-[5px] rounded border border-[#d1d1d1] bg-white">
        <input aria-label="Formula" defaultValue="Elisha" className="flex-1 h-6 pl-[9px]" />
        <ChevronUp size={17} strokeWidth={2} className="mt-0.5" />
      </div>
    </div>
  );
}

function SheetTabs() {
  return (
    <div className="flex items-center h-8 shrink-0 text-[#444]">
      <IconButton label="Previous sheet" className="ml-6"><ChevronLeft size={17} strokeWidth={2} /></IconButton>
      <IconButton label="Next sheet" className="ml-4 text-[#999]"><ChevronRight size={17} strokeWidth={2} /></IconButton>
      <span className="ml-4 w-[13px] flex gap-0.5">
        <i className="size-[3px] rounded-full bg-[#444]" /><i className="size-[3px] rounded-full bg-[#444]" /><i className="size-[3px] rounded-full bg-[#444]" />
      </span>
      <button type="button" className="self-start h-7 ml-[14px] w-[70px] bg-white rounded-b px-2 text-[12px] font-semibold text-[#262626] text-center">
        <span className="block border-b-2 border-[#107c41] leading-[22px]">Monthly</span>
      </button>
      <span className="w-px h-[18px] ml-1 bg-[#ccc]" />
      <IconButton label="New sheet" className="ml-[38px]"><Plus size={17} strokeWidth={1.5} /></IconButton>
      <span className="ml-auto mr-4 flex flex-col gap-[3px]">
        <i className="size-0.5 bg-[#444]" /><i className="size-0.5 bg-[#444]" /><i className="size-0.5 bg-[#444]" />
      </span>
      <div className="flex items-center w-[528px] h-4 mr-5 rounded-md bg-[#f6f6f6] px-1">
        <span className="border-y-4 border-r-[7px] border-y-transparent border-r-[#606060]" />
        <span className="ml-[5px] w-[480px] h-[9px] rounded bg-[#707070]" />
        <span className="ml-auto border-y-4 border-l-[7px] border-y-transparent border-l-[#606060]" />
      </div>
    </div>
  );
}

function ExcelStatusBar() {
  return (
    <footer className="flex items-center h-[22px] shrink-0 border-t border-[#c6c6c6] bg-[#f4f4f4] text-[11px] text-[#333]">
      <span className="ml-[11px]">Ready</span>
      <button type="button" className="ml-5 flex items-center gap-1 text-[10px] font-bold">
        <Svg w={14} h={14}><circle cx="6" cy="2" r="1.500" stroke="#333" /><path d="M0 3.500 4.500 5v3L2.500 13.500M12 3.500 7.500 5v3M4.500 8.500 7 8M8 8l5 5m0-5-5 5" stroke="#333" strokeWidth="1.200" /></Svg>
        Accessibility: Investigate
      </button>
      <div className="ml-auto flex items-center h-full">
        <IconButton label="Normal view" className="w-10 h-full bg-[#e0e0e0]">
          <Svg w={13} h={13}><path d="M.5.5h12v12H.5zM.5 4.500h12M.5 8.500h12M4.500.5v12M8.500.5v12" stroke="#222" /></Svg>
        </IconButton>
        <IconButton label="Page layout view" className="w-10 h-full">
          <Svg w={13} h={13}><path d="M.5.5h12v12H.5zM3 2.500h7v8H3zM4.500 5h4M4.500 7h4M4.500 9h4" stroke="#222" /></Svg>
        </IconButton>
        <IconButton label="Page break view" className="w-10 h-full">
          <Svg w={13} h={13}><path d="M.5.5h12v12H.5zM4.500.5v7h-4M8.500.5v7h-4" stroke="#222" /></Svg>
        </IconButton>
        <IconButton label="Zoom out" className="ml-1"><Minus size={12} strokeWidth={2} /></IconButton>
        <input
          type="range"
          aria-label="Zoom"
          defaultValue={50}
          className="mx-[3px] w-[100px] h-3 appearance-none bg-transparent [&::-webkit-slider-runnable-track]:h-px [&::-webkit-slider-runnable-track]:bg-[#666] [&::-webkit-slider-thumb]:appearance-none [&::-webkit-slider-thumb]:w-[5px] [&::-webkit-slider-thumb]:h-[11px] [&::-webkit-slider-thumb]:-mt-[5px] [&::-webkit-slider-thumb]:bg-[#606060]"
        />
        <IconButton label="Zoom in"><Plus size={12} strokeWidth={2} /></IconButton>
        <span className="ml-3 mr-5 text-[10px]">100%</span>
      </div>
    </footer>
  );
}

function ExcelWindow() {
  return (
    <section className="absolute left-64 right-[242px] top-[51px] bottom-[103px] flex flex-col bg-[#f0f0f0] border border-[#107c41] shadow-[0_3px_14px_rgba(0,0,0,0.55)]">
      <ExcelTitleBar />
      <nav className="flex items-center h-[30px] pt-0.5 pl-[22px] pr-3 gap-[22px] text-[12px] text-[#333] shrink-0">
        <button type="button" className="mr-1">File</button>
        <button type="button" className="font-semibold border-b-2 border-[#107c41] leading-[22px]">Home</button>
        {excelTabs.map((t) => (
          <button key={t} type="button" className="whitespace-nowrap">{t}</button>
        ))}
        <div className="ml-auto flex gap-2">
          <button type="button" className="flex items-center justify-center gap-1 w-[90px] h-6 rounded border border-[#8a8a8a] bg-white text-[11px]">
            <Svg w={12} h={12}><path d="M.5 1.500h11v7H6L3.500 11V8.500h-3z" stroke="#333" /></Svg>
            Comments
          </button>
          <button type="button" className="flex items-center justify-center gap-1 w-[71px] h-6 rounded bg-[#107c41] text-white text-[11px]">
            <Svg w={12} h={12}><path d="M5 3H.5v8.500h9V8M4 8c0-3 2-4 5-4V1.500L11.500 5 9 8V6C7 6 5 6.500 4 8z" stroke="#fff" /></Svg>
            Share
            <Chev />
          </button>
        </div>
      </nav>
      <Ribbon />
      <FormulaBar />
      <Sheet />
      <SheetTabs />
      <ExcelStatusBar />
    </section>
  );
}

/* ---------- taskbar ---------- */

function AppLetter({ size, children }: { size: number; children: string }) {
  return (
    <b className={clsx("absolute left-0 w-1/2 text-center text-white", size > 20 ? "top-[5px] text-[10px] leading-[14px]" : "top-[3px] text-[8px] leading-[10px]")}>
      {children}
    </b>
  );
}

function OfficeIcon({ letter, colors, size = 24 }: { letter: string; colors: [string, string, string]; size?: number }) {
  return (
    <span className="relative flex">
      <Svg w={size} h={size} box="0 0 24 24">
        <path d="M7 1h17v8H7z" fill={colors[2]} />
        <path d="M7 8h17v8H7z" fill={colors[1]} />
        <path d="M7 15h17v8H7z" fill={colors[0]} />
        <path d="M0 6h12v12H0z" fill={colors[0]} />
      </Svg>
      <AppLetter size={size}>{letter}</AppLetter>
    </span>
  );
}

function TeamsIcon({ size }: { size: number }) {
  return (
    <span className="relative flex">
      <Svg w={size} h={size} box="0 0 24 24">
        <circle cx="13" cy="4" r="3.500" fill="#7b83eb" /><circle cx="20" cy="5" r="2.500" fill="#5059c9" />
        <path d="M8 8h15v9a6 6 0 0 1-12 3z" fill="#6b73dd" /><path d="M0 6h12v12H0z" fill="#4b53bc" />
        <circle cx="18" cy="17" r="7" fill="#13a10e" /><path d="m14.500 17 2.500 2.500 4.500-4.500" stroke="#fff" strokeWidth="1.800" />
      </Svg>
      <AppLetter size={size}>T</AppLetter>
    </span>
  );
}

function OutlookIcon({ size }: { size: number }) {
  return (
    <span className="relative flex">
      <Svg w={size} h={size} box="0 0 24 24">
        <path d="M7 1h14v13H7z" fill="#28a8ea" /><path d="M7 1h7v6H7z" fill="#0f6cbd" /><path d="M5 12h19v11H5z" fill="#1490df" /><path d="m24 12-19 11h19z" fill="#50d9ff" />
        <path d="M0 6h12v12H0z" fill="#0f6cbd" />
      </Svg>
      <AppLetter size={size}>O</AppLetter>
    </span>
  );
}

function KeeperIcon({ size, square, dot }: { size: number; square?: boolean; dot?: boolean }) {
  return (
    <Svg w={size} h={size} box="0 0 24 24">
      {square && <path d="M0 0h24v24H0z" fill="#000" />}
      <circle cx="12" cy="12" r="8.500" fill="#f5c518" />
      <path d="M7 5v14M10 3.500v17M13 4v6l4-4.500M13 20v-6l4 4.500M12 12h2l5-4M14 12l5 4" stroke="#111" strokeWidth="1.300" />
      {dot && <circle cx="19" cy="5" r="3.500" fill="#e8343f" />}
    </Svg>
  );
}

const taskIcons: { label: string; icon: ReactNode; open?: boolean; active?: boolean }[] = [
  { label: "Outlook", icon: <OutlookIcon size={24} />, open: true },
  { label: "Teams", icon: <TeamsIcon size={24} />, open: true },
  { label: "Sage", icon: <SageLogo size={24} />, open: true },
  {
    label: "File Explorer",
    open: true,
    icon: <Svg w={24} h={24}><path d="M1 4h9l2 2h11v15H1z" fill="#f5b31b" /><path d="M1 8h22v13H1z" fill="#ffd76a" /><path d="M5 21v-6h14v6h-4v-3H9v3z" fill="#3a96dd" /></Svg>,
  },
  {
    label: "Snipping Tool",
    icon: <Svg w={24} h={24}><ellipse cx="11" cy="9" rx="10" ry="7" transform="rotate(-25 11 9)" fill="#f3f3f3" stroke="#d5323a" strokeWidth="1.500" /><path d="m12 3 3 13M6 9l10 6" stroke="#888" /><circle cx="14" cy="20" r="2.500" stroke="#2a8bd0" strokeWidth="1.600" /><circle cx="20" cy="16" r="2.500" stroke="#2a8bd0" strokeWidth="1.600" /></Svg>,
  },
  { label: "Excel", icon: <OfficeIcon letter="X" colors={["#107c41", "#21a366", "#33c481"]} />, open: true, active: true },
  {
    label: "Chrome",
    open: true,
    icon: <Svg w={24} h={24}><circle cx="12" cy="12" r="11.500" fill="#34a853" /><path d="M2 6.300A11.500 11.500 0 0 1 22 6.500H12L7 14z" fill="#ea4335" /><path d="M22 6.500A11.500 11.500 0 0 1 11.500 23.500L17 14l-2-7.500z" fill="#fbbc04" /><circle cx="12" cy="12" r="5.500" fill="#fff" /><circle cx="12" cy="12" r="4.300" fill="#4285f4" /></Svg>,
  },
  { label: "Keeper", icon: <KeeperIcon size={24} square /> },
  {
    label: "Acrobat",
    open: true,
    icon: <Svg w={24} h={24}><rect x="1.500" y="1.500" width="21" height="21" rx="4" fill="#040b1c" /><path d="M11 5c3 0 0 8-5 12-2 1-1-1 5-3 5-1 8 0 7 1s-6-2-7-10z" stroke="#fff" strokeWidth="1.300" /></Svg>,
  },
  { label: "Word", icon: <OfficeIcon letter="W" colors={["#185abd", "#2b7cd3", "#41a5ee"]} />, open: true },
  {
    label: "Games",
    open: true,
    icon: <Svg w={24} h={24}><rect x="2" y="2" width="20" height="20" rx="3" fill="#3a0e8a" /><path d="M15 8c-3-2-7-1-7 4 0 4 5 5 7 2v-3h-3M15 13l2 5" stroke="#f4eaff" strokeWidth="2" /><path d="M5 6l1 1M18 5l-1 2M5 17l2-1" stroke="#c9a6ff" /></Svg>,
  },
  { label: "Window", icon: null, open: true },
  {
    label: "Remote support",
    open: true,
    icon: <Svg w={24} h={24}><circle cx="12" cy="12" r="10" stroke="#d9f4ef" strokeWidth="3" strokeDasharray="17 4" /><circle cx="12" cy="12" r="10" stroke="#1aa89a" strokeWidth="1.800" strokeDasharray="17 4" /><circle cx="12" cy="12" r="6" fill="#d9f4ef" /><circle cx="12" cy="12" r="5.500" fill="#1aa89a" stroke="#1aa89a" strokeWidth="1.800" strokeDasharray="2.300 2" /><circle cx="12" cy="12" r="2" fill="#222" /></Svg>,
  },
];

const trayIcons: ReactNode[] = [
  <KeeperIcon size={20} dot />,
  <span className="size-4 bg-[#2e3440] text-[12px] leading-4 font-bold text-center">D</span>,
  <TeamsIcon size={16} />,
  <Svg w={16} h={16}><path d="m4 0 3 2-3 2-3-2zM11 0l3 2-3 2-3-2zM11 4l3 2-3 2-3-2z" fill="#fff" /><rect y="6" width="9" height="10" rx="2" fill="#d9001b" /><path d="m3 9 2-1v6" stroke="#fff" strokeWidth="1.300" /></Svg>,
  <Svg w={16} h={16}><circle cx="8" cy="8" r="7" fill="#777" stroke="#ccc" strokeWidth="1.500" /><path d="M11 5H7a1.500 1.500 0 0 0 0 3h2a1.500 1.500 0 0 1 0 3H5" stroke="#fff" strokeWidth="1.500" /></Svg>,
  <Svg w={16} h={16}><path d="M1.500 10V2L7 10V1" stroke="#eee" strokeWidth="2.200" /><path d="m8 7 7 9m0-9-7 9" stroke="#bbb" strokeWidth="2.200" /></Svg>,
  <OutlookIcon size={16} />,
  <Svg w={14} h={16}><path d="M3.500 4.500V.5h6v4M1.500 5.500h8v10h-8zM5 2v1M8 2v1" stroke="#fff" /><path d="m8 13 2 2 4-5" stroke="#ccc" /></Svg>,
  <Svg w={16} h={16}><path d="M7.500 0 14 2v5c0 4-3 7-6.500 8.500C4 14 1 11 1 7V2z" fill="#fff" /><path d="M7.500 1v14M1 7h13" stroke="#222" /><circle cx="11.500" cy="11.500" r="4.500" fill="#10893e" /><path d="m9.500 11.500 1.500 1.500 2.500-3" stroke="#fff" /></Svg>,
  <Svg w={16} h={14}><path d="M6 4.500h8.500v6H4.500V8" stroke="#fff" /><path d="M8 6h5v3H8zM15 6h1v3h-1z" fill="#fff" /><path d="M1 1v2M4 1v2M0 3.500h5v2L3.500 7h-2L0 5.500zM2.500 7v3H4" stroke="#fff" /></Svg>,
  <Svg w={17} h={15}><path d="M5 2.500h11v8H3.500V6M9.500 10.500v3M6 13.500h7" stroke="#fff" /><path d="M.5.500h4v4h-4z" stroke="#fff" /></Svg>,
  <Svg w={17} h={14}><path d="M.5 5v4h3l4 3.500v-11L3.500 5z" stroke="#fff" /><path d="M10 5c1 1 1 3 0 4M12.500 3c2 2 2 6 0 8M15 1.500c3 3 2 8 0 11" stroke="#fff" /></Svg>,
  <Svg w={12} h={16}><rect x="3" y="0" width="6" height="11" rx="2.500" fill="#fff" /><path d="M1 8c0 6 10 6 10 0M6 13v2.500M3.500 15.500h5" stroke="#fff" /></Svg>,
];

function Taskbar() {
  return (
    <footer className="flex h-10 shrink-0 bg-linear-to-r from-[#3b2d23] via-[#33281f] to-[#26262b] text-white">
      <IconButton label="Start" className="w-12 bg-[#222127] shrink-0">
        <Svg w={16} h={16}><path d="m0 2.300 7-1v6.300H0zM8 1.100 16 0v7.600H8zM0 8.500h7v6.300l-7-1zM8 8.500h8V16l-8-1.100z" fill="#fff" /></Svg>
      </IconButton>
      <label className="flex items-center w-72 pl-[11px] gap-2.5 bg-[#f1f1f1] border border-[#c5c5c5] text-[#222] shrink-0">
        <Search size={18} strokeWidth={1.7} className="-scale-x-100" />
        <input type="text" placeholder="Type here to search" className="flex-1 min-w-0 bg-transparent outline-none text-[14px] placeholder:text-[#333]" />
      </label>
      <div className="flex pl-0.5">
        {taskIcons.map((t) => (
          <button
            key={t.label}
            type="button"
            aria-label={t.label}
            className={clsx("flex flex-col items-center justify-end w-[49px] h-10 px-1", t.active && "bg-white/20")}
          >
            <span className="flex-1 flex items-center">{t.icon}</span>
            <span className={clsx("h-0.5 w-full", t.open && "bg-[#76b9ed]")} />
          </button>
        ))}
      </div>
      <div className="ml-auto flex items-center">
        {trayIcons.map((icon, i) => (
          <span key={i} className="w-8 flex justify-center">{icon}</span>
        ))}
        <time className="w-[62px] text-center text-[11px] leading-[18px]">
          2:32 PM
          <br />
          8/5/2025
        </time>
        <button type="button" aria-label="Notifications" className="relative w-10 h-10 ml-2 mr-[3px] flex items-center">
          <span className="ml-0.5 mb-1">
            <Svg w={17} h={16}><path d="M0 0h16v12H7l-3 3.500V12H0z" fill="#fff" /><path d="M3 3.500h10M3 6h10M3 8.500h7" stroke="#26262b" /></Svg>
          </span>
          <span className="absolute left-2.5 top-4 size-5 rounded-full border border-[#aaa] bg-[#333] text-[11px] leading-[18px] font-semibold">20</span>
        </button>
        <span className="w-px h-full mr-1 bg-[#777]" />
      </div>
    </footer>
  );
}

export default function App() {
  return (
    <main className="relative flex flex-col h-screen overflow-hidden font-['Open_Sans','Noto_Sans',sans-serif] text-black">
      <PayrollWindow />
      <ExplorerWindow />
      <ExcelWindow />
      <Taskbar />
    </main>
  );
}
